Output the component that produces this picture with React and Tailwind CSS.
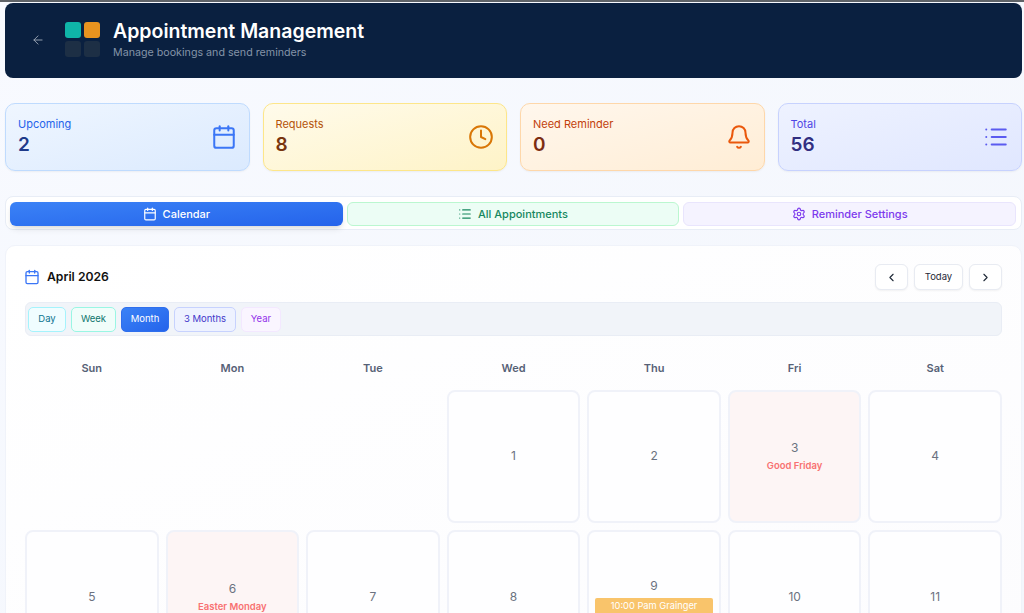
import React from 'react';
import { ArrowLeft, Bell, Calendar, ChevronLeft, ChevronRight, Clock, List, Settings } from 'lucide-react';

const stats = [
  { label: 'Upcoming', value: '2', Icon: Calendar, box: 'from-[#eff6ff] to-[#dbeafe] border-[#bfdbfe]', labelColor: 'text-[#2563eb]', valueColor: 'text-[#1e3a8a]', iconColor: 'text-[#3b76f6]' },
  { label: 'Requests', value: '8', Icon: Clock, box: 'from-[#fffbeb] to-[#fef3c7] border-[#fde68a]', labelColor: 'text-[#b45309]', valueColor: 'text-[#78350f]', iconColor: 'text-[#d97706]' },
  { label: 'Need Reminder', value: '0', Icon: Bell, box: 'from-[#fff7ed] to-[#ffedd5] border-[#fed7aa]', labelColor: 'text-[#c2410c]', valueColor: 'text-[#7c2d12]', iconColor: 'text-[#ea580c]' },
  { label: 'Total', value: '56', Icon: List, box: 'from-[#eef2ff] to-[#e0e7ff] border-[#c7d2fe]', labelColor: 'text-[#4f46e5]', valueColor: 'text-[#312e81]', iconColor: 'text-[#5b5bf0]' },
];

const views = [
  { label: 'Day', cls: 'w-[38px] bg-[#f0fdff] border-[#a5f3fc] text-[#0e7490]' },
  { label: 'Week', cls: 'w-[45px] bg-[#f0fdfa] border-[#99f6e4] text-[#0f766e]' },
  { label: 'Month', cls: 'w-[48px] bg-gradient-to-br from-[#3b82f6] to-[#2563eb] border-[#2f6fed] text-white' },
  { label: '3 Months', cls: 'w-[62px] bg-[#eef2ff] border-[#c7d2fe] text-[#4338ca]' },
  { label: 'Year', cls: 'w-[40px] bg-[#faf5ff] border-[#f3e8ff] text-[#9333ea]' },
];

const weekdays = ['Sun', 'Mon', 'Tue', 'Wed', 'Thu', 'Fri', 'Sat'];

const holidays = { 3: 'Good Friday', 6: 'Easter Monday' };
const events = { 9: '10:00 Pam Grainger' };

const DayCell = ({ day }) => {
  const holiday = holidays[day];
  const event = events[day];

  return (
    <div className={`h-[133.5px] rounded-lg border-2 border-[#f0f2f9] flex flex-col items-center justify-center ${holiday ? 'bg-[#fdf5f5]' : 'bg-[#fefeff]'}`}>
      <span className="text-[12px] leading-[18px] text-[#6b7280]">{day}</span>
      {holiday && <span className="mt-[2px] text-[9.5px] leading-[14px] font-semibold text-[#f87171]">{holiday}</span>}
      {event && (
        <span className="mt-[3px] w-[118px] h-[18px] rounded-[2px] bg-[#f9c46b] text-center text-[9.3px] leading-[15px] text-white">{event}</span>
      )}
    </div>
  );
};

export default function App() {
  const days = Array.from({ length: 11 }, (_, i) => i + 1);

  return (
    <div className="h-[613px] overflow-hidden bg-gradient-to-br from-[#f8faff] to-[#f3f6fc] font-['Inter','Liberation_Sans',sans-serif] border-t-[2px] border-[#5f6368] pt-[1px] pl-[5px] pr-[2px]">
      <header className="h-[75px] rounded-lg bg-[#0a2040] flex items-center pl-[26px] pb-[2px]">
        <ArrowLeft size={14} strokeWidth={1.5} className="text-[#a5aebb]" />
        <div className="ml-5 grid grid-cols-2 gap-[3px]">
          <div className="w-4 h-4 rounded-[3px] bg-[#0fb5a8]" />
          <div className="w-4 h-4 rounded-[3px] bg-[#e8931f]" />
          <div className="w-4 h-4 rounded-[3px] bg-[#1d2f45]" />
          <div className="w-4 h-4 rounded-[3px] bg-[#1d2f45]" />
        </div>
        <div className="ml-[13px]">
          <h1 className="text-[19.5px] leading-[26px] font-semibold text-white">Appointment Management</h1>
          <p className="mt-[1px] text-[10.7px] leading-[16px] text-[#8494a8]">Manage bookings and send reminders</p>
        </div>
      </header>

      <section className="mt-[25px] grid grid-cols-4 gap-[13px]">
        {stats.map(({ label, value, Icon, box, labelColor, valueColor, iconColor }) => (
          <div key={label} className={`h-[68px] rounded-[10px] border bg-gradient-to-br shadow-xs flex items-center justify-between pl-3 pr-3 ${box}`}>
            <div>
              <div className={`text-[11px] leading-[15px] ${labelColor}`}>{label}</div>
              <div className={`text-[19px] leading-[25px] font-semibold ${valueColor}`}>{value}</div>
            </div>
            <Icon size={26} strokeWidth={1.85} className={iconColor} />
          </div>
        ))}
      </section>

      <nav className="mt-[25px] h-[34px] rounded-lg bg-white border border-[#e8edf6] grid grid-cols-3 gap-1 pt-[5px] pl-1 pr-[5px]">
        <button className="h-6 rounded-md bg-gradient-to-br from-[#3b82f6] to-[#2563eb] shadow-md text-white text-[11px] font-medium flex items-center justify-center gap-[6px]">
          <Calendar size={14} strokeWidth={2} />
          Calendar
        </button>
        <button className="h-6 rounded-md bg-[#ecfdf5] border border-[#bbf7d0] text-[#16875f] text-[11px] font-medium flex items-center justify-center gap-[6px]">
          <List size={14} strokeWidth={2} />
          All Appointments
        </button>
        <button className="h-6 rounded-md bg-[#f5f3ff] border border-[#e9e5fd] text-[#7c3aed] text-[11px] font-medium flex items-center justify-center gap-[6px]">
          <Settings size={14} strokeWidth={2} />
          Reminder Settings
        </button>
      </nav>

      <main className="mt-[15px] rounded-t-[10px] bg-gradient-to-br from-white to-[#fcfcfe] px-[19px] pt-[18px] border border-[#f0f3fa]">
        <div className="h-[26px] flex items-center justify-between">
          <div className="flex items-center gap-[7px]">
            <Calendar size={16} strokeWidth={2} className="-ml-[1px] text-[#3b76f6]" />
            <h2 className="text-[12.2px] font-semibold text-[#111111]">April 2026</h2>
          </div>
          <div className="flex items-center gap-[6px]">
            <button className="w-[33px] h-[26px] rounded-md bg-white border border-[#e8ebf2] shadow-xs flex items-center justify-center text-[#1f2937]">
              <ChevronLeft size={13} />
            </button>
            <button className="w-[49px] h-[26px] rounded-md bg-white border border-[#e8ebf2] shadow-xs text-[9.5px] text-[#1f2937]">Today</button>
            <button className="w-[33px] h-[26px] rounded-md bg-white border border-[#e8ebf2] shadow-xs flex items-center justify-center text-[#1f2937]">
              <ChevronRight size={13} />
            </button>
          </div>
        </div>

        <div className="mt-3 h-[34px] rounded-md bg-[#f1f4f9] border border-[#e9edf5] flex items-center gap-[5px] px-[2px]">
          {views.map(({ label, cls }) => (
            <button key={label} className={`h-[25px] rounded-[5px] border text-[9.5px] ${cls}`}>{label}</button>
          ))}
        </div>

        <div className="mt-[24px] grid grid-cols-7 gap-x-[7px]">
          {weekdays.map((d) => (
            <div key={d} className="text-center text-[11px] leading-[16px] font-semibold text-[#566176]">{d}</div>
          ))}
        </div>

        <div className="mt-[13.5px] grid grid-cols-7 gap-[7px]">
          <div className="col-span-3" />
          {days.map((day) => (
            <DayCell key={day} day={day} />
          ))}
        </div>
      </main>
    </div>
  );
}
